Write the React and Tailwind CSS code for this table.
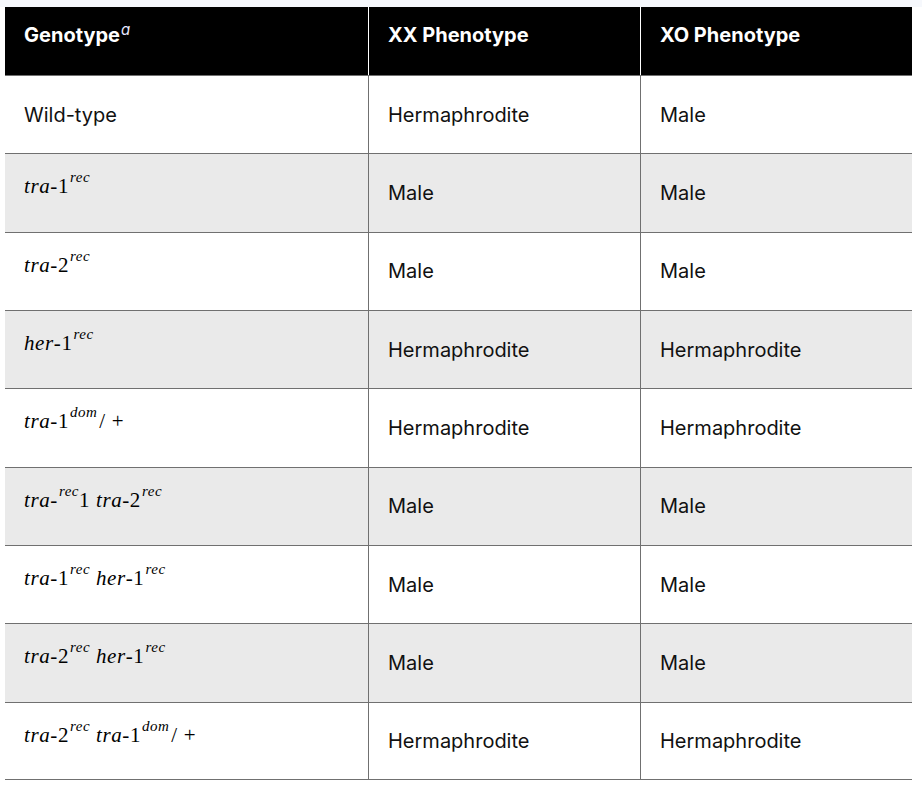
import React from "react";

const sans = { fontFamily: "Inter, 'Liberation Sans', sans-serif" };

function V({ children }) {
  return <i className="italic">{children}</i>;
}

function Sup({ children }) {
  return <sup className="text-[15px] italic top-[-11px] ml-[1px] tracking-[0.5px]">{children}</sup>;
}

const rows = [
  { g: "Wild-type", xx: "Hermaphrodite", xo: "Male" },
  { g: <><V>tra</V>-1<Sup>rec</Sup></>, xx: "Male", xo: "Male" },
  { g: <><V>tra</V>-2<Sup>rec</Sup></>, xx: "Male", xo: "Male" },
  { g: <><V>her</V>-1<Sup>rec</Sup></>, xx: "Hermaphrodite", xo: "Hermaphrodite" },
  { g: <><V>tra</V>-1<Sup>dom</Sup><span className="ml-[2px]">/ +</span></>, xx: "Hermaphrodite", xo: "Hermaphrodite" },
  { g: <><V>tra</V>-<Sup>rec</Sup>1 <V>tra</V>-2<Sup>rec</Sup></>, xx: "Male", xo: "Male" },
  { g: <><V>tra</V>-1<Sup>rec</Sup> <V>her</V>-1<Sup>rec</Sup></>, xx: "Male", xo: "Male" },
  { g: <><V>tra</V>-2<Sup>rec</Sup> <V>her</V>-1<Sup>rec</Sup></>, xx: "Male", xo: "Male" },
  { g: <><V>tra</V>-2<Sup>rec</Sup> <V>tra</V>-1<Sup>dom</Sup><span className="ml-[2px]">/ +</span></>, xx: "Hermaphrodite", xo: "Hermaphrodite" },
];

export default function App() {
  return (
    <div className="w-[922px] h-[787px] bg-white overflow-hidden" style={sans}>
      <div className="h-[7px] bg-[#f6f8fc]" />
      <div className="ml-[5px] w-[907px] text-[20px] text-[#111]">
        {/* header */}
        <div className="grid grid-cols-[363px_272px_272px] h-[68px] bg-black text-white font-bold leading-[28px]">
          <div className="pl-[19px] pt-[14px]">
            Genotype<sup className="font-normal italic text-[15px] text-[#e8e8ff] top-[-7px] ml-[1px]">a</sup>
          </div>
          <div className="border-l border-white pl-[19px] pt-[14px]">XX Phenotype</div>
          <div className="border-l border-white pl-[19px] pt-[14px]">XO Phenotype</div>
        </div>

        {rows.map((r, i) => {
          const isText = typeof r.g === "string";
          return (
            <div
              key={i}
              className={
                "grid grid-cols-[363px_272px_272px] h-[78.33px] border-t border-[#707070] " +
                (i % 2 === 1 ? "bg-[#eaeaea] " : "bg-white ") +
                (i === rows.length - 1 ? "border-b" : "")
              }
            >
              {isText ? (
                <div className="pl-[19px] flex items-center">{r.g}</div>
              ) : (
                <div
                  className="pl-[19px] pt-[20px] leading-[24px] whitespace-nowrap text-[21px] tracking-[0.6px] text-black"
                  style={{ fontFamily: "'Liberation Serif', serif" }}
                >
                  {r.g}
                </div>
              )}
              <div className="border-l border-[#707070] pl-[19px] flex items-center">{r.xx}</div>
              <div className="border-l border-[#707070] pl-[19px] flex items-center">{r.xo}</div>
            </div>
          );
        })}
      </div>
    </div>
  );
}
